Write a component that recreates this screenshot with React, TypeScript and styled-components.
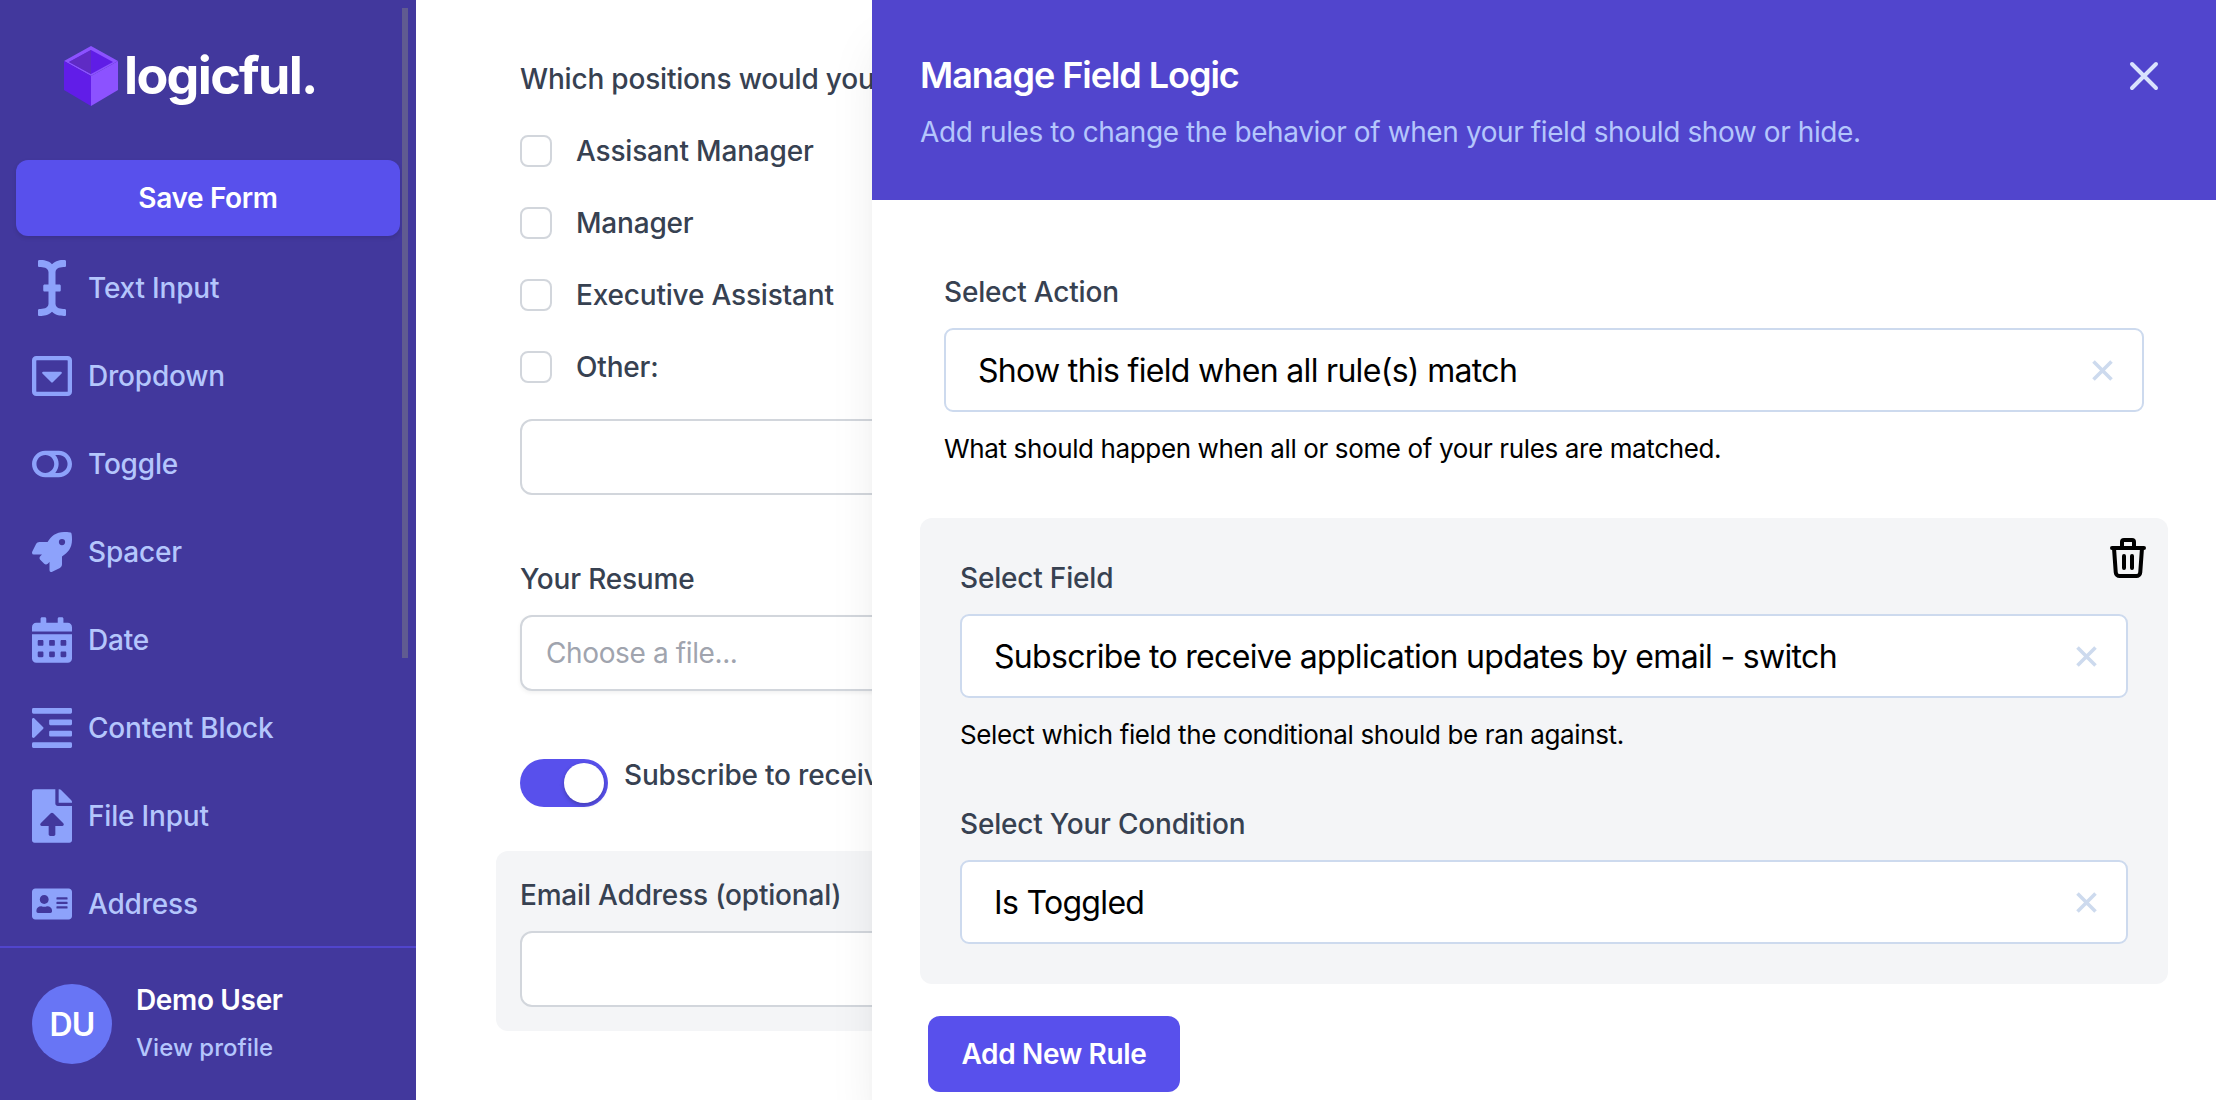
import React from 'react';
import styled, { createGlobalStyle } from 'styled-components';
import {
  FaICursor,
  FaRegCaretSquareDown,
  FaToggleOff,
  FaRocket,
  FaCalendarAlt,
  FaIndent,
  FaFileUpload,
  FaAddressCard,
} from 'react-icons/fa';

const GlobalStyle = createGlobalStyle`
  *, *::before, *::after { box-sizing: border-box; }
  body {
    margin: 0;
    background: #fff;
    font-family: Inter, "Liberation Sans", sans-serif;
    font-size: 28px;
    line-height: 40px;
    letter-spacing: -0.19px;
    color: #374151;
    overflow: hidden;
  }
  button, input { font: inherit; letter-spacing: inherit; }
`;

const Page = styled.div`
  position: relative;
  display: flex;
  height: 1100px;
  overflow: hidden;
`;

/* ---------- sidebar ---------- */

const Sidebar = styled.aside`
  flex: none;
  display: flex;
  flex-direction: column;
  width: 416px;
  background: #42389d;
`;

const SidebarScroll = styled.div`
  position: relative;
  flex: 1;
  min-height: 0;
  overflow: hidden;
  padding: 0 16px;
`;

const ScrollThumb = styled.div`
  position: absolute;
  top: 8px;
  right: 8px;
  width: 6px;
  height: 650px;
  background: #605b91;
`;

const Brand = styled.div`
  display: flex;
  align-items: center;
  height: 160px;
  padding: 0 0 9px 48px;
`;

const BrandName = styled.span`
  margin-left: 6px;
  color: #fff;
  font-size: 52px;
  font-weight: 700;
  line-height: 60px;
  letter-spacing: -1.7px;
`;

const PrimaryButton = styled.button<{ $block?: boolean }>`
  display: ${(p) => (p.$block ? 'block' : 'inline-block')};
  width: ${(p) => (p.$block ? '100%' : '252px')};
  height: 76px;
  padding: 0;
  border: 0;
  border-radius: 12px;
  background: #5850ec;
  box-shadow: ${(p) => (p.$block ? '0 2px 4px rgba(0, 0, 0, 0.12)' : 'none')};
  color: #fff;
  font-weight: 600;
  letter-spacing: -0.35px;
  white-space: nowrap;
`;

const NavList = styled.nav`
  display: flex;
  flex-direction: column;
  padding: 8px 0;
`;

const NavItem = styled.a`
  display: flex;
  align-items: center;
  gap: 16px;
  height: 88px;
  padding-left: 16px;
  color: #b4c6fc;
  font-weight: 500;

  svg {
    flex: none;
    width: 40px;
    height: 56px;
    color: #8da2fb;
  }
`;

const UserBar = styled.div`
  flex: none;
  display: flex;
  align-items: center;
  gap: 24px;
  height: 154px;
  padding: 0 32px;
  border-top: 2px solid #5145cd;
`;

const Avatar = styled.div`
  display: flex;
  align-items: center;
  justify-content: center;
  width: 80px;
  height: 80px;
  padding-top: 2px;
  border-radius: 50%;
  background: #6875f5;
  color: #fff;
  font-size: 32px;
  font-weight: 600;
  letter-spacing: -0.8px;
`;

const UserName = styled.div`
  color: #fff;
  font-weight: 600;
  line-height: 46px;
  letter-spacing: -0.35px;
`;

const UserLink = styled.div`
  color: #b4c6fc;
  font-size: 24px;
  font-weight: 500;
  line-height: 50px;
  margin-bottom: -2px;
  letter-spacing: 0.05px;
`;

/* ---------- form ---------- */

const FormArea = styled.main`
  flex: 1;
  min-width: 0;
  display: flex;
  flex-direction: column;
  padding: 59px 80px 0;
`;

const FieldGroup = styled.section<{ $gap: number; $active?: boolean }>`
  margin-top: ${(p) => p.$gap}px;
  padding: 24px;
  border-radius: 12px;
  background: ${(p) => (p.$active ? '#f4f5f7' : 'transparent')};
`;

const Label = styled.div`
  color: #374151;
  font-weight: 500;
  white-space: nowrap;
`;

const Options = styled.div`
  display: flex;
  flex-direction: column;
  gap: 32px;
  padding: 32px 0 16px;
`;

const Option = styled.label`
  display: flex;
  align-items: center;
  gap: 24px;
  height: 40px;
  color: #374151;
  font-weight: 500;
`;

const Checkbox = styled.span`
  width: 32px;
  height: 32px;
  border: 2px solid #d2d6dc;
  border-radius: 8px;
  background: #fff;
`;

const TextBox = styled.div<{ $raised?: boolean }>`
  display: flex;
  align-items: center;
  height: 76px;
  margin-top: 16px;
  padding: 0 24px;
  border: 2px solid #d2d6dc;
  border-radius: 12px;
  background: #fff;
  box-shadow: ${(p) => (p.$raised ? '0 2px 4px rgba(0, 0, 0, 0.06)' : 'none')};
  color: #a0a4ae;
  letter-spacing: -0.38px;
`;

const SwitchRow = styled.div`
  display: flex;
  gap: 16px;
  height: 48px;
`;

const SwitchLabel = styled(Label)`
  line-height: 32px;
`;

const Switch = styled.span`
  flex: none;
  display: flex;
  justify-content: flex-end;
  width: 88px;
  height: 48px;
  padding: 4px;
  border-radius: 24px;
  background: #5850ec;
`;

const Knob = styled.span`
  width: 40px;
  height: 40px;
  border-radius: 50%;
  background: #fff;
  box-shadow: 0 2px 4px rgba(0, 0, 0, 0.25);
`;

/* ---------- slide-over panel ---------- */

const Panel = styled.section`
  position: absolute;
  top: 0;
  right: 0;
  bottom: 0;
  width: 1344px;
  background: #fff;
  box-shadow: 0 40px 50px -10px rgba(0, 0, 0, 0.1), 0 20px 20px -10px rgba(0, 0, 0, 0.04);
`;

const PanelHeader = styled.header`
  display: flex;
  justify-content: space-between;
  height: 200px;
  padding: 48px;
  background: #5145cd;
`;

const PanelTitle = styled.h2`
  margin: 0;
  color: #fff;
  font-size: 36px;
  font-weight: 600;
  line-height: 54px;
  letter-spacing: -1.04px;
`;

const PanelHint = styled.p`
  margin: 10px 0 0;
  color: #b4c6fc;
  letter-spacing: -0.4px;
  white-space: nowrap;
`;

const IconButton = styled.button`
  display: block;
  height: max-content;
  padding: 0;
  border: 0;
  background: none;
  line-height: 0;
`;

const CloseButton = styled(IconButton)`
  margin-top: 4px;
`;

const PanelBody = styled.div`
  padding: 72px 48px 0;
`;

const ActionField = styled.div`
  padding: 0 24px;
`;

const SelectBox = styled.div`
  display: flex;
  align-items: center;
  justify-content: space-between;
  height: 84px;
  margin-top: 16px;
  padding: 0 29px 0 32px;
  border: 2px solid #cddaee;
  border-radius: 9px;
  background: #fff;
  color: #000;
  font-size: 32px;
  letter-spacing: -0.68px;
  white-space: nowrap;
`;

const SelectValue = styled.span`
  padding-top: 2px;
`;

const HelpText = styled.p`
  margin: 17px 0 0;
  color: #000;
  font-size: 26px;
  letter-spacing: -0.37px;
  white-space: nowrap;
`;

const RuleCard = styled.div`
  position: relative;
  height: 466px;
  margin: 49px 0 32px;
  padding: 40px;
  border-radius: 12px;
  background: #f4f5f7;
`;

const RuleField = styled.div`
  & + & {
    margin-top: 49px;
  }
`;

const RemoveRule = styled(IconButton)`
  position: absolute;
  top: 16px;
  right: 16px;
`;

const PanelActions = styled.div`
  padding-left: 8px;
`;

const Cube = () => (
  <svg width="54" height="60" viewBox="0 0 54 60">
    <path d="M27 0 54 15 27 30 0 15Z" fill="#8c52ff" />
    <path d="M27 4 49 16 27 28 5 16Z" fill="#5f1de6" />
    <path d="M27 4V28L5 16Z" fill="#5f2bc4" />
    <path d="M0 15 27 30V60L0 44Z" fill="#611de8" />
    <path d="M54 15 27 30V60L54 44Z" fill="#8c52ff" />
  </svg>
);

const CloseIcon = () => (
  <svg width="48" height="48" viewBox="0 0 24 24" fill="none" stroke="#d9e2fd" strokeWidth="2" strokeLinecap="round">
    <path d="M6 18L18 6M6 6l12 12" />
  </svg>
);

const ClearIcon = () => (
  <svg width="21" height="21" viewBox="0 0 21 21" fill="none" stroke="#cddaee" strokeWidth="3.6">
    <path d="M1.5 1.5l18 18M19.5 1.5l-18 18" />
  </svg>
);

const TrashIcon = () => (
  <svg width="48" height="48" viewBox="0 0 24 24" fill="none" stroke="#000" strokeWidth="2" strokeLinecap="round" strokeLinejoin="round">
    <path d="M4 7h16M19 7l-.87 12.14A2 2 0 0116.14 21H7.86a2 2 0 01-1.99-1.86L5 7m5 4v6m4-6v6m1-10V4a1 1 0 00-1-1h-4a1 1 0 00-1 1v3" />
  </svg>
);

const navItems = [
  { label: 'Text Input', Icon: FaICursor },
  { label: 'Dropdown', Icon: FaRegCaretSquareDown },
  { label: 'Toggle', Icon: FaToggleOff },
  { label: 'Spacer', Icon: FaRocket },
  { label: 'Date', Icon: FaCalendarAlt },
  { label: 'Content Block', Icon: FaIndent },
  { label: 'File Input', Icon: FaFileUpload },
  { label: 'Address', Icon: FaAddressCard },
];

const positions = ['Assisant Manager', 'Manager', 'Executive Assistant', 'Other:'];

const Select = ({ value }: { value: string }) => (
  <SelectBox>
    <SelectValue>{value}</SelectValue>
    <ClearIcon />
  </SelectBox>
);

export default function App() {
  return (
    <>
      <GlobalStyle />
      <Page>
        <Sidebar>
          <SidebarScroll>
            <Brand>
              <Cube />
              <BrandName>logicful.</BrandName>
            </Brand>
            <PrimaryButton $block>Save Form</PrimaryButton>
            <NavList>
              {navItems.map(({ label, Icon }) => (
                <NavItem key={label}>
                  <Icon />
                  {label}
                </NavItem>
              ))}
            </NavList>
            <ScrollThumb />
          </SidebarScroll>
          <UserBar>
            <Avatar>DU</Avatar>
            <div>
              <UserName>Demo User</UserName>
              <UserLink>View profile</UserLink>
            </div>
          </UserBar>
        </Sidebar>

        <FormArea>
          <FieldGroup $gap={-24}>
            <Label>Which positions would you</Label>
            <Options>
              {positions.map((name) => (
                <Option key={name}>
                  <Checkbox />
                  {name}
                </Option>
              ))}
            </Options>
            <TextBox />
          </FieldGroup>
          <FieldGroup $gap={16}>
            <Label>Your Resume</Label>
            <TextBox $raised>Choose a file...</TextBox>
          </FieldGroup>
          <FieldGroup $gap={20}>
            <SwitchRow>
              <Switch>
                <Knob />
              </Switch>
              <SwitchLabel>Subscribe to receive</SwitchLabel>
            </SwitchRow>
          </FieldGroup>
          <FieldGroup $gap={20} $active>
            <Label>Email Address (optional)</Label>
            <TextBox />
          </FieldGroup>
        </FormArea>

        <Panel>
          <PanelHeader>
            <div>
              <PanelTitle>Manage Field Logic</PanelTitle>
              <PanelHint>Add rules to change the behavior of when your field should show or hide.</PanelHint>
            </div>
            <CloseButton aria-label="Close">
              <CloseIcon />
            </CloseButton>
          </PanelHeader>
          <PanelBody>
            <ActionField>
              <Label>Select Action</Label>
              <Select value="Show this field when all rule(s) match" />
              <HelpText>What should happen when all or some of your rules are matched.</HelpText>
            </ActionField>
            <RuleCard>
              <RemoveRule aria-label="Remove rule">
                <TrashIcon />
              </RemoveRule>
              <RuleField>
                <Label>Select Field</Label>
                <Select value="Subscribe to receive application updates by email - switch" />
                <HelpText>Select which field the conditional should be ran against.</HelpText>
              </RuleField>
              <RuleField>
                <Label>Select Your Condition</Label>
                <Select value="Is Toggled" />
              </RuleField>
            </RuleCard>
            <PanelActions>
              <PrimaryButton>Add New Rule</PrimaryButton>
            </PanelActions>
          </PanelBody>
        </Panel>
      </Page>
    </>
  );
}
